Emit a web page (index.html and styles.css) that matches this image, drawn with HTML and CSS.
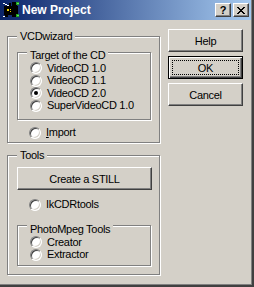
FILE: index.html
```html
<!DOCTYPE html>
<html>
<head>
<meta charset="utf-8">
<link rel="stylesheet" href="styles.css">
</head>
<body>
<div class="window">
  <div class="titlebar">
    <svg class="app-icon" width="17" height="16" viewBox="0 0 17 16" shape-rendering="crispEdges">
      <rect x="1" y="4" width="14" height="9" fill="#000"/>
      <rect x="0" y="1" width="2" height="1" fill="#fff"/>
      <rect x="2" y="2" width="2" height="1" fill="#fff"/>
      <rect x="4" y="3" width="2" height="1" fill="#fff"/>
      <rect x="6" y="1" width="2" height="3" fill="#000"/>
      <rect x="9" y="0" width="5" height="4" fill="#000"/>
      <rect x="13" y="0" width="3" height="3" fill="#1fa01f"/>
      <rect x="14" y="1" width="2" height="1" fill="#5fe05f"/>
      <rect x="4" y="7" width="2" height="2" fill="#e8d000"/>
      <rect x="7" y="7" width="1" height="1" fill="#e8d000"/>
      <rect x="7" y="9" width="1" height="1" fill="#e8d000"/>
      <rect x="2" y="13" width="3" height="2" fill="#000"/>
      <rect x="0" y="14" width="2" height="1" fill="#fff"/>
      <rect x="13" y="12" width="3" height="3" fill="#1fa01f"/>
      <rect x="14" y="13" width="2" height="1" fill="#5fe05f"/>
      <rect x="9" y="13" width="4" height="2" fill="#000"/>
    </svg>
    <span class="title">New Project</span>
    <div class="caption-btns">
      <div class="cap-btn"><span class="q">?</span></div>
      <div class="cap-btn">
        <svg width="8" height="7" viewBox="0 0 8 7" shape-rendering="crispEdges">
          <path d="M0 0h2v1H0zM6 0h2v1H6zM1 1h2v1H1zM5 1h2v1H5zM2 2h4v1H2zM3 3h2v1H3zM2 4h4v1H2zM1 5h2v1H1zM5 5h2v1H5zM0 6h2v1H0zM6 6h2v1H6z" fill="#000"/>
        </svg>
      </div>
    </div>
  </div>
  <div class="client">
    <div class="left-col">
      <div class="group vcd">
        <div class="glabel">VCDwizard</div>
        <div class="group inner target">
          <div class="glabel">Target of the CD</div>
          <div class="opt"><span class="radio"></span><span>VideoCD 1.0</span></div>
          <div class="opt"><span class="radio"></span><span>VideoCD 1.1</span></div>
          <div class="opt"><span class="radio checked"></span><span>VideoCD 2.0</span></div>
          <div class="opt"><span class="radio"></span><span>SuperVideoCD 1.0</span></div>
        </div>
        <div class="opt single import"><span class="radio"></span><span><u>I</u>mport</span></div>
      </div>
      <div class="group tools">
        <div class="glabel">Tools</div>
        <div class="btn wide">Create a STILL</div>
        <div class="opt single ikcdr"><span class="radio"></span><span>IkCDRtools</span></div>
        <div class="group inner photo">
          <div class="glabel">PhotoMpeg Tools</div>
          <div class="opt"><span class="radio"></span><span>Creator</span></div>
          <div class="opt"><span class="radio"></span><span>Extractor</span></div>
        </div>
      </div>
    </div>
    <div class="right-col">
      <div class="btn">Help</div>
      <div class="btn default"><span class="focus">OK</span></div>
      <div class="btn">Cancel</div>
    </div>
  </div>
</div>
</body>
</html>
```
FILE: styles.css
```css
html, body {
  margin: 0;
  padding: 0;
  background: #d4d0c8;
}

.window {
  width: 254px;
  height: 287px;
  box-sizing: border-box;
  background: #d4d0c8;
  border-right: 2px solid #404040;
  border-bottom: 2px solid #404040;
  box-shadow: inset -1px -1px 0 #808080;
  display: flex;
  flex-direction: column;
  font-family: "Liberation Sans", Arial, sans-serif;
  font-size: 11px;
  letter-spacing: -0.3px;
  color: #000;
  overflow: hidden;
}

.titlebar {
  height: 20px;
  margin-right: 1px;
  flex: none;
  display: flex;
  align-items: center;
  background: linear-gradient(to right, #0a246a, #a6caf0);
}

.app-icon {
  margin-left: 3px;
  margin-right: 2px;
  flex: none;
}

.title {
  color: #fff;
  font-weight: bold;
  font-size: 12px;
  letter-spacing: 0;
  flex: 1;
}

.caption-btns {
  display: flex;
  gap: 2px;
  margin-right: 2px;
}

.cap-btn {
  width: 16px;
  height: 14px;
  box-sizing: border-box;
  background: #d4d0c8;
  border: 1px solid;
  border-color: #fff #404040 #404040 #fff;
  box-shadow: inset -1px -1px 0 #808080;
  display: flex;
  align-items: center;
  justify-content: center;
}

.cap-btn .q {
  font-weight: bold;
  font-size: 11px;
  line-height: 11px;
  letter-spacing: 0;
}

.client {
  flex: 1;
  display: flex;
  padding-left: 7px;
}

.left-col {
  width: 153px;
  display: flex;
  flex-direction: column;
}

.group {
  border: 1px solid #808080;
  box-shadow: inset 1px 1px 0 #fff, 1px 1px 0 #fff;
  display: flex;
  flex-direction: column;
  align-items: flex-start;
}

.glabel {
  margin-top: -7px;
  margin-left: 9px;
  padding: 0 3px 0 3px;
  height: 13px;
  line-height: 13px;
  background: #d4d0c8;
  white-space: nowrap;
}

.vcd {
  margin-top: 16px;
  height: 107px;
  box-sizing: border-box;
}

.inner {
  margin-left: 9px;
  width: 134px;
  box-sizing: border-box;
}

.target {
  margin-top: 9px;
  height: 68px;
  padding-top: 3px;
}

.opt {
  height: 12.5px;
  display: flex;
  align-items: center;
  margin-left: 12px;
  white-space: nowrap;
  line-height: 13px;
}

.opt.single {
  height: 13px;
  margin-left: 21px;
}

.radio {
  width: 12px;
  height: 12px;
  box-sizing: border-box;
  border-radius: 50%;
  border: 1px solid;
  border-color: #808080 #fff #fff #808080;
  background: #fff;
  box-shadow: inset 1px 1px 0 #404040, inset -1px -1px 0 #d4d0c8;
  margin-right: 5px;
  flex: none;
  display: flex;
  align-items: center;
  justify-content: center;
}

.radio.checked::after {
  content: "";
  width: 4px;
  height: 4px;
  border-radius: 50%;
  background: #000;
}

.import {
  margin-top: 6px;
}

.tools {
  margin-top: 12px;
  height: 120px;
  box-sizing: border-box;
}

.btn {
  width: 75px;
  height: 23px;
  box-sizing: border-box;
  border: 1px solid;
  border-color: #fff #404040 #404040 #fff;
  box-shadow: inset -1px -1px 0 #808080;
  background: #d4d0c8;
  display: flex;
  align-items: center;
  justify-content: center;
  flex: none;
}

.btn.wide {
  width: 135px;
  margin-left: 9px;
  margin-top: 5px;
}

.ikcdr {
  margin-top: 8px;
}

.photo {
  margin-top: 14px;
  height: 41px;
  padding-top: 4px;
}

.right-col {
  margin-left: 8px;
  padding-top: 9px;
  display: flex;
  flex-direction: column;
  gap: 4px;
}

.btn.default {
  border: 1px solid #000;
  box-shadow: inset 1px 1px 0 #fff, inset -1px -1px 0 #404040, inset -2px -2px 0 #808080;
  padding: 3px;
}

.btn.default .focus {
  flex: 1;
  align-self: stretch;
  border: 1px dotted #000;
  display: flex;
  align-items: center;
  justify-content: center;
}
```
